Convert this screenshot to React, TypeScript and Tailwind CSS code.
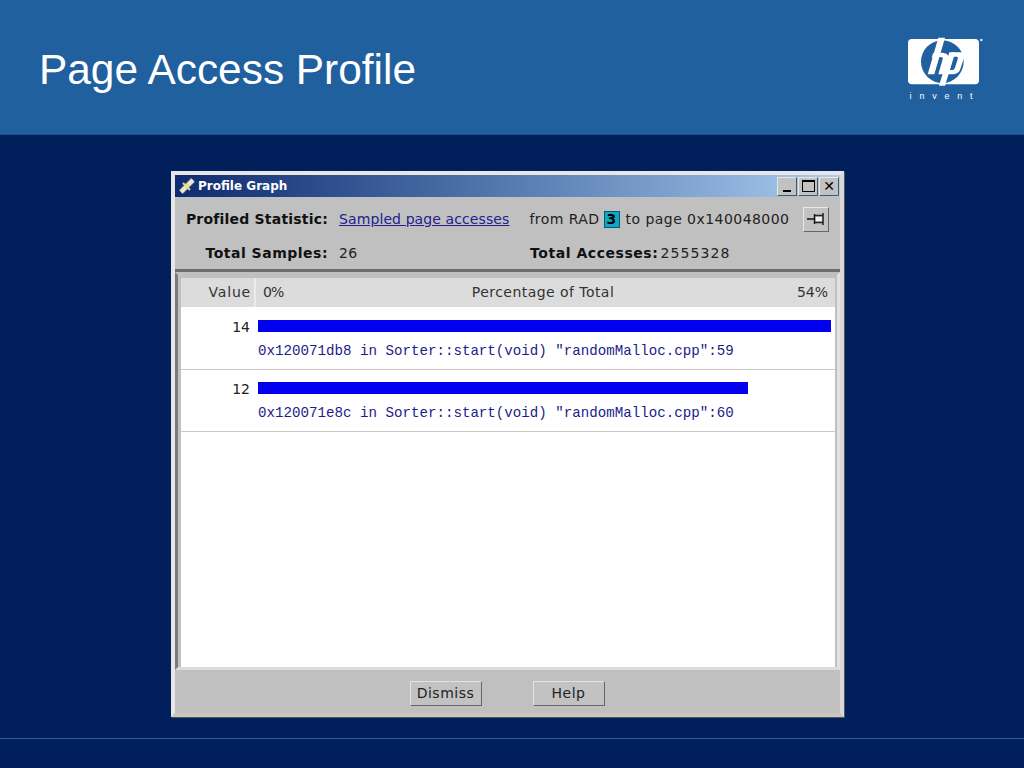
const sans = "font-['DejaVu_Sans',sans-serif]";

function HpLogo() {
  return (
    <svg width="80" height="55" viewBox="0 0 240 165" className="block">
      <rect x="9" y="12" width="213" height="136" rx="12" fill="#fff" />
      <circle cx="112" cy="80" r="64" fill="#20609e" />
      <path d="M100 8 L120 8 L88 118 L68 118 Z" fill="#fff" />
      <path d="M100 118 L117 118 L130 72 C134 55 118 50 84 55 L80 68 L106 66 C112 66 114 68 113 73 Z" fill="#fff" />
      <path d="M133 52 L151 52 L120 152 L102 152 Z" fill="#fff" />
      <path d="M140 52 L165 52 C180 52 180 62 176 72 L166 102 C162 113 155 118 140 118 L118 118 L122 105 L140 105 C146 105 148 103 150 98 L158 72 C160 66 158 65 152 65 L138 65 Z" fill="#fff" />
      <circle cx="229" cy="15" r="4" fill="#cfe0ef" />
    </svg>
  );
}

function SatelliteIcon() {
  return (
    <svg width="18" height="18" viewBox="0 0 18 18" className="block">
      <path d="M3 15 L15 3" stroke="#8a8875" strokeWidth="5.5" />
      <path d="M3 15 L8 10 M10 8 L15 3" stroke="#e8e7da" strokeWidth="4" />
      <path d="M5 6 L12 13" stroke="#d8d6bc" strokeWidth="2" />
      <circle cx="9" cy="9" r="2.4" fill="#ece27e" />
    </svg>
  );
}

function PinIcon() {
  return (
    <svg width="18" height="14" viewBox="0 0 18 14" className="block">
      <path d="M0 7 H7 M7.5 2 V12 M16 1 V13" stroke="#111" strokeWidth="1.4" fill="none" />
      <path d="M8 3.5 H16 M8 10.5 H16" stroke="#222" strokeWidth="1.4" fill="none" />
      <rect x="9" y="5" width="6" height="4" fill="#eee" />
    </svg>
  );
}

function WinButton({ children }: { children: React.ReactNode }) {
  return (
    <div className="flex h-[19px] w-5 items-center justify-center border border-t-[#e8e8e8] border-l-[#e8e8e8] border-r-[#555] border-b-[#555] bg-[#c2c2c2]">
      {children}
    </div>
  );
}

function Bar({ value, width, addr, line }: { value: number; width: number; addr: string; line: number }) {
  return (
    <div className="h-[62px] border-b border-[#c9c9c4] bg-white pt-[11px]">
      <div className="flex h-[13px] items-center">
        <span className={`w-[69px] pt-[2px] text-right text-[14px] leading-none text-[#222] ${sans}`}>{value}</span>
        <div className="ml-[8px] h-[12px] bg-[#0000ee]" style={{ width }} />
      </div>
      <div className="ml-[77px] mt-[11px] whitespace-pre font-['Liberation_Mono',monospace] text-[14.17px] leading-[16px] text-[#1c1c8a]">
        {`${addr} in Sorter::start(void) "randomMalloc.cpp":${line}`}
      </div>
    </div>
  );
}

function WinBtn({ label }: { label: string }) {
  return (
    <button className={`h-[25px] w-[72px] border border-t-[#e4e4e4] border-l-[#e4e4e4] border-r-[#666] border-b-[#666] bg-[#c2c2c2] text-[14px] tracking-[0.5px] text-[#222] ${sans}`}>
      {label}
    </button>
  );
}

export default function App() {
  return (
    <div className="flex h-[768px] w-[1024px] flex-col overflow-hidden bg-[#001f5b]">
      <header className="flex h-[135px] shrink-0 items-start justify-between border-b border-[#1b4f8a] bg-[#21609e] pl-[39px] pr-[39px]">
        <h1 className="mt-[45px] font-['Liberation_Sans',sans-serif] text-[42.4px] leading-[50px] text-white">Page Access Profile</h1>
        <div className="mt-[35px] flex flex-col items-center">
          <HpLogo />
          <div className="mt-[1px] font-['Liberation_Sans',sans-serif] text-[9px] leading-[10px] tracking-[7.8px] text-white">invent</div>
        </div>
      </header>

      <main className="ml-[171px] mt-[36px] flex h-[546px] w-[673px] shrink-0 flex-col border-[4px] border-t-[#e6e6e6] border-l-[#e6e6e6] border-r-[#d9d9d9] border-b-[#c8c8c0] bg-[#c0c0c0] shadow-[1px_1px_0_#555]">
        <div className="flex h-[22px] shrink-0 items-center justify-between bg-gradient-to-r from-[#0f2a70] to-[#a9cdef] pl-[3px] pr-[1px]">
          <div className="flex items-center gap-[2px]">
            <SatelliteIcon />
            <span className={`text-[12px] font-bold leading-none text-white ${sans}`}>Profile Graph</span>
          </div>
          <div className="flex gap-[1px]">
            <WinButton><div className="mt-[9px] h-[2px] w-[8px] bg-black" /></WinButton>
            <WinButton><div className="h-[12px] w-[13px] border border-t-2 border-black" /></WinButton>
            <WinButton><span className={`text-[14px] font-bold leading-none text-black ${sans}`}>✕</span></WinButton>
          </div>
        </div>

        <div className={`h-[75px] shrink-0 border-b-[3px] border-[#6e6e6e] text-[14px] text-[#222] ${sans}`}>
          <div className="flex h-[44px] items-center">
            <span className="w-[153px] text-right font-bold tracking-[0.2px] text-[#111]">Profiled Statistic:</span>
            <span className="ml-[11px] tracking-[0.1px] text-[#20208f] underline">Sampled page accesses</span>
            <span className="ml-[20px] flex items-center tracking-[0.45px]">
              from RAD
              <span className="ml-[4px] mr-[6px] flex h-[17px] w-[16px] items-center justify-center border border-[#005a70] bg-[#12a5c4] font-bold leading-none text-black">3</span>
              to page 0x140048000
            </span>
            <div className="ml-[14px] flex h-[25px] w-[26px] items-center justify-center border border-t-[#e8e8e8] border-l-[#e8e8e8] border-r-[#666] border-b-[#666] bg-[#c2c2c2]">
              <PinIcon />
            </div>
          </div>
          <div className="flex h-[25px] items-center">
            <span className="w-[153px] text-right font-bold tracking-[0.5px] text-[#111]">Total Samples:</span>
            <span className="ml-[11px] w-[191px] tracking-[0.35px]">26</span>
            <span className="font-bold tracking-[0.55px] text-[#111]">Total Accesses:</span>
            <span className="ml-[2px] tracking-[1.1px]">2555328</span>
          </div>
        </div>

        <div className="flex min-h-0 flex-1 flex-col border-[3px] border-b-[#dcdcdc] border-l-[#7a7a7a] border-r-[#e2e2e2] border-t-[#c0c0c0] pl-[3px] pr-[2px] pt-[3px]">
          <div className={`flex h-[29px] shrink-0 items-center bg-[#dcdcdc] text-[14px] text-[#333] ${sans}`}>
            <span className="w-[75px] border-r-2 border-[#ececec] pr-[3px] text-right leading-[29px] tracking-[0.8px]">Value</span>
            <div className="flex flex-1 justify-between pl-[7px] pr-[7px]">
              <span className="tracking-[-1px]">0%</span>
              <span className="ml-[6px] tracking-[0.45px]">Percentage of Total</span>
              <span>54%</span>
            </div>
          </div>
          <div className="min-h-0 flex-1 bg-white pt-[1px]">
            <Bar value={14} width={573} addr="0x120071db8" line={59} />
            <Bar value={12} width={490} addr="0x120071e8c" line={60} />
          </div>
        </div>

        <div className="flex h-[43px] shrink-0 items-center justify-center gap-[51px] pr-[1px] pt-[4px]">
          <WinBtn label="Dismiss" />
          <WinBtn label="Help" />
        </div>
      </main>

      <div className="mt-[21px] h-px shrink-0 bg-[#2a5a9a]" />
    </div>
  );
}
